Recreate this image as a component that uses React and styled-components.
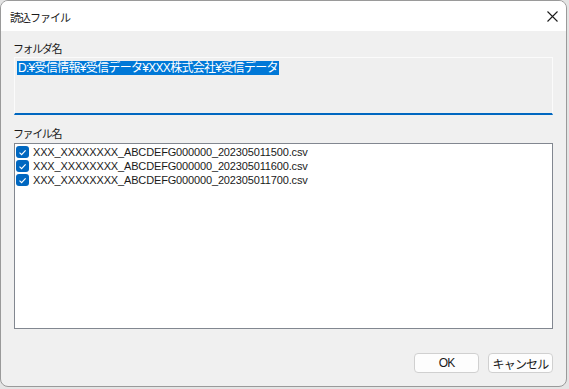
import styled, { createGlobalStyle } from 'styled-components';

const files = [
  'XXX_XXXXXXXX_ABCDEFG000000_202305011500.csv',
  'XXX_XXXXXXXX_ABCDEFG000000_202305011600.csv',
  'XXX_XXXXXXXX_ABCDEFG000000_202305011700.csv',
];

const GlobalStyle = createGlobalStyle`
  html, body {
    margin: 0;
    padding: 0;
    background: #e4e4e4;
  }
  body {
    width: 569px;
    height: 389px;
    overflow: hidden;
    font-family: 'Liberation Sans', 'Noto Sans CJK JP', sans-serif;
  }
`;

const CheckIcon = () => (
  <svg width="9" height="9" viewBox="0 0 9 9">
    <path d="M1.5 4.6 L3.6 6.6 L7.6 2.4" fill="none" stroke="#fff" strokeWidth="1.2" />
  </svg>
);

const CloseIcon = () => (
  <svg width="11" height="11" viewBox="0 0 11 11">
    <path d="M0.5 0.5 L10.5 10.5 M10.5 0.5 L0.5 10.5" stroke="#1c1c1c" strokeWidth="1.1" />
  </svg>
);

const App = () => {
  return (
    <>
      <GlobalStyle />
      <Window>
        <TitleBar>
          <Title>読込ファイル</Title>
          <CloseButton>
            <CloseIcon />
          </CloseButton>
        </TitleBar>
        <Body>
          <Label>フォルダ名</Label>
          <PathBox>
            <Selected>D:¥受信情報¥受信データ¥XXX株式会社¥受信データ</Selected>
          </PathBox>
          <Label $gap>ファイル名</Label>
          <FileList>
            {files.map((name) => (
              <FileRow key={name}>
                <Checkbox>
                  <CheckIcon />
                </Checkbox>
                <FileName>{name}</FileName>
              </FileRow>
            ))}
          </FileList>
          <ButtonRow>
            <Button>OK</Button>
            <Button>キャンセル</Button>
          </ButtonRow>
        </Body>
      </Window>
    </>
  );
};

const Window = styled.div`
  width: 565px;
  height: 385px;
  display: flex;
  flex-direction: column;
  background: #f0f0f0;
  border: 1px solid #9a9a9a;
  border-radius: 8px;
  overflow: hidden;
`;

const TitleBar = styled.div`
  height: 30px;
  flex-shrink: 0;
  background: #ffffff;
  display: flex;
  align-items: center;
  justify-content: space-between;
  padding: 0 8px 0 9px;
`;

const Title = styled.span`
  font-family: 'Noto Sans CJK JP', sans-serif;
  font-size: 11px;
  letter-spacing: -1px;
  color: #1a1a1a;
  margin-top: 1px;
`;

const CloseButton = styled.span`
  display: flex;
  width: 11px;
  height: 11px;
`;

const Body = styled.div`
  flex: 1;
  display: flex;
  flex-direction: column;
  padding: 9px 13px 0 13px;
`;

const Label = styled.div`
  font-family: 'Noto Sans CJK JP', sans-serif;
  font-size: 11px;
  letter-spacing: -1.4px;
  line-height: 16px;
  height: 16px;
  color: #1a1a1a;
  margin-top: ${(p) => (p.$gap ? '10px' : '0')};
  margin-left: -1px;
`;

const PathBox = styled.div`
  margin-top: 1px;
  height: 55px;
  border: 1px solid #fbfbfb;
  border-bottom: 2px solid #0067c0;
  background: #efefef;
  padding: 0 2px;
`;

const Selected = styled.span`
  display: inline-block;
  height: 14px;
  line-height: 14px;
  padding: 0 1px;
  background: #0078d7;
  color: #ffffff;
  font-size: 12px;
  letter-spacing: -0.7px;
  font-family: 'Liberation Sans', 'Noto Sans CJK JP', sans-serif;
`;

const FileList = styled.div`
  margin-top: 2px;
  height: 183px;
  border: 1px solid #828790;
  background: #ffffff;
  padding-top: 1px;
  display: flex;
  flex-direction: column;
`;

const FileRow = styled.div`
  height: 14px;
  display: flex;
  align-items: center;
  padding-left: 1px;
`;

const Checkbox = styled.span`
  width: 13px;
  height: 12px;
  border-radius: 3px;
  background: #0067c0;
  display: flex;
  align-items: center;
  justify-content: center;
  flex-shrink: 0;
`;

const FileName = styled.span`
  margin-left: 4px;
  font-size: 11px;
  letter-spacing: -0.15px;
  color: #1a1a1a;
  line-height: 14px;
`;

const ButtonRow = styled.div`
  margin-top: 24px;
  display: flex;
  justify-content: flex-end;
  gap: 9px;
`;

const Button = styled.button`
  width: 65px;
  height: 20px;
  padding: 0;
  border: 1px solid #d0d0d0;
  border-radius: 4px;
  background: #fdfdfd;
  font-family: 'Liberation Sans', 'Noto Sans CJK JP', sans-serif;
  font-size: 12px;
  letter-spacing: -0.8px;
  color: #1a1a1a;
`;

export default App;
